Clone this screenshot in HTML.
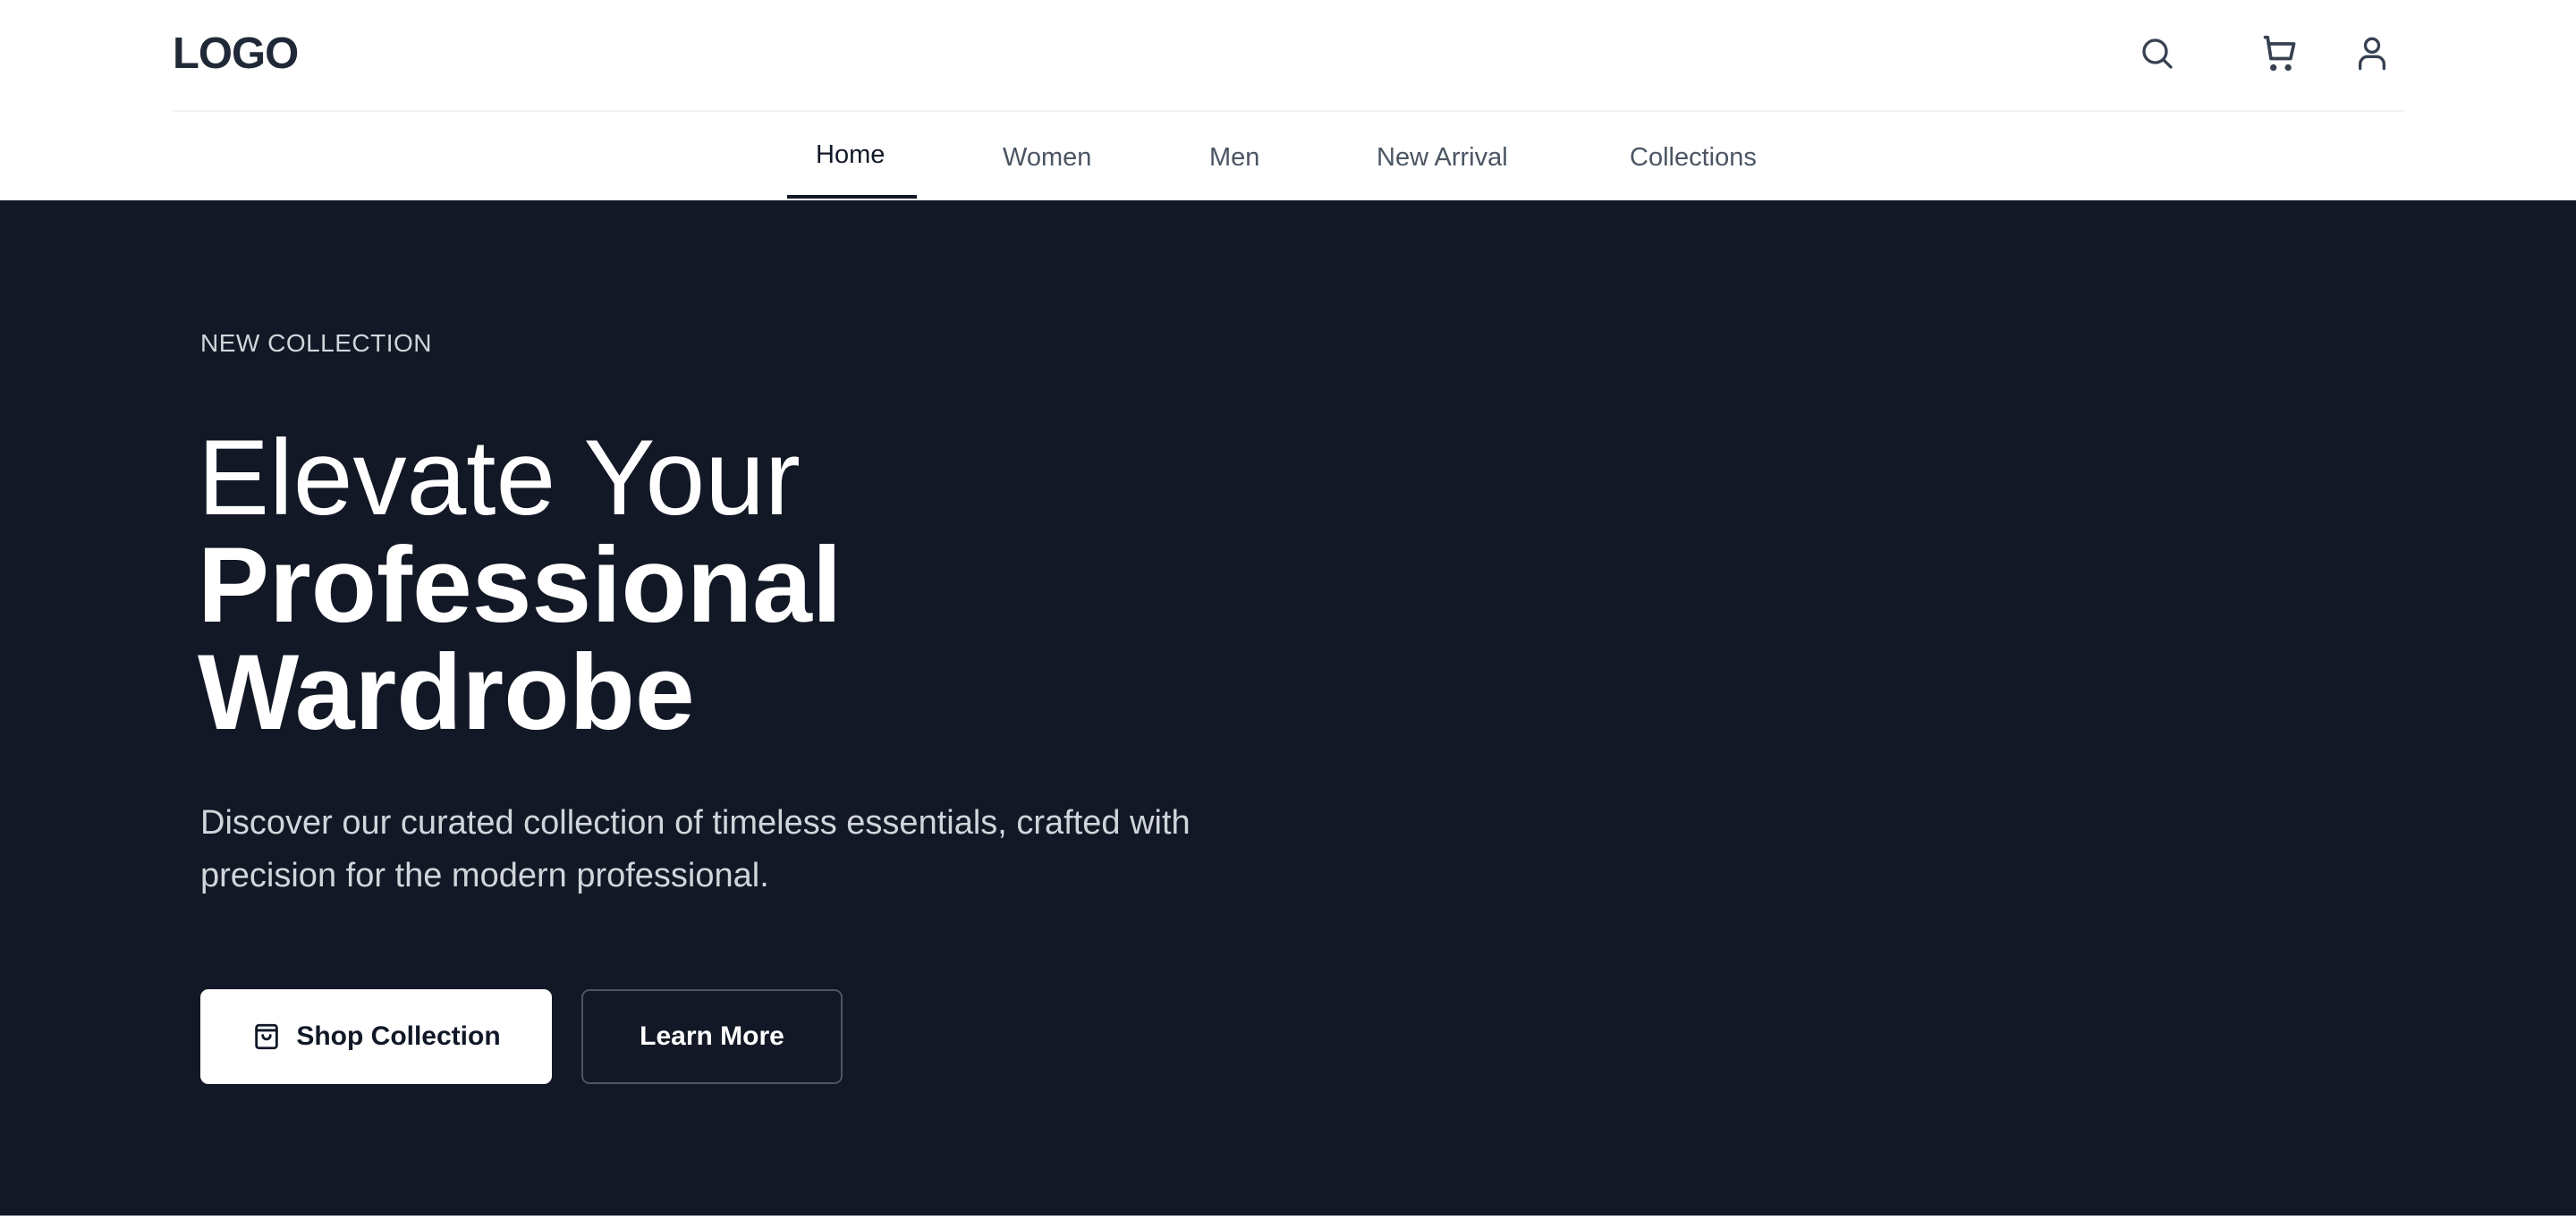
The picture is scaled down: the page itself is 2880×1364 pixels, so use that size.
<!DOCTYPE html>
<html><head><meta charset="utf-8"><style>
*{margin:0;padding:0;box-sizing:border-box}
body{width:2880px;height:1364px;background:#fff;font-family:"Liberation Sans",sans-serif;overflow:hidden;position:relative}
.abs{position:absolute;white-space:nowrap}
.logo{left:193px;top:32px;font-size:49px;font-weight:bold;color:#1f2937;letter-spacing:-1px}
.div{left:193px;top:123px;width:2495px;height:2px;background:#f0f0f0}
.nav{top:160px;font-size:29px;color:#4b5563}
.hero{position:absolute;left:0;top:224px;width:2880px;height:1135px;background:#131826}
.nc{left:224px;top:368px;font-size:28px;color:#d1d5db;letter-spacing:0.5px}
.h1{left:221px;font-size:120px;color:#fff;line-height:120px}
.p{left:224px;top:891px;font-size:38px;color:#d1d5db;line-height:59px}
.btn{position:absolute;top:1106px;height:106px;border-radius:9px;display:flex;align-items:center;justify-content:center;font-size:30px;font-weight:bold}
</style></head><body>
<div class="abs logo">LOGO</div>
<svg class="abs" style="left:2392px;top:40px" width="40" height="40" viewBox="0 0 24 24" fill="none" stroke="#374151" stroke-width="2" stroke-linecap="round"><circle cx="10.5" cy="10.5" r="7.5"/><path d="M16 16l5 5"/></svg>
<svg class="abs" style="left:2526px;top:38px" width="46" height="44" viewBox="0 0 24 24" fill="none" stroke="#374151" stroke-width="2" stroke-linecap="round" stroke-linejoin="round"><path d="M3 2h1.5l2 13h12l2-9H5"/><circle cx="8" cy="20.5" r="1" fill="#374151"/><circle cx="17" cy="20.5" r="1" fill="#374151"/></svg>
<svg class="abs" style="left:2634px;top:40px" width="36" height="40" viewBox="0 0 20 24" fill="none" stroke="#374151" stroke-width="2" stroke-linecap="round"><circle cx="10" cy="6.5" r="4.5"/><path d="M2 22v-3a5 5 0 0 1 5-5h6a5 5 0 0 1 5 5v3"/></svg>
<div class="abs div"></div>
<div class="abs nav" style="left:912px;color:#111827;top:157px">Home</div>
<div class="abs nav" style="left:1121px">Women</div>
<div class="abs nav" style="left:1352px">Men</div>
<div class="abs nav" style="left:1539px">New Arrival</div>
<div class="abs nav" style="left:1822px">Collections</div>
<div class="abs" style="left:880px;top:218px;width:145px;height:4px;background:#111827"></div>
<div class="hero"></div>
<div class="abs nc">NEW COLLECTION</div>
<div class="abs h1" style="top:474px;font-weight:300">Elevate Your</div>
<div class="abs h1" style="top:594px;font-weight:bold">Professional</div>
<div class="abs h1" style="top:714px;font-weight:bold">Wardrobe</div>
<div class="abs p">Discover our curated collection of timeless essentials, crafted with<br>precision for the modern professional.</div>
<div class="btn" style="left:224px;width:393px;background:#fff;color:#111827">
<svg width="34" height="34" viewBox="0 0 24 24" fill="none" stroke="#111827" stroke-width="2" stroke-linecap="round" stroke-linejoin="round" style="margin-right:16px"><rect x="4" y="3" width="16" height="18" rx="2"/><path d="M4 7h16"/><path d="M9 11a3 3 0 0 0 6 0"/></svg>Shop Collection</div>
<div class="btn" style="left:650px;width:292px;border:2px solid #4b5563;color:#fff">Learn More</div>
</body></html>
